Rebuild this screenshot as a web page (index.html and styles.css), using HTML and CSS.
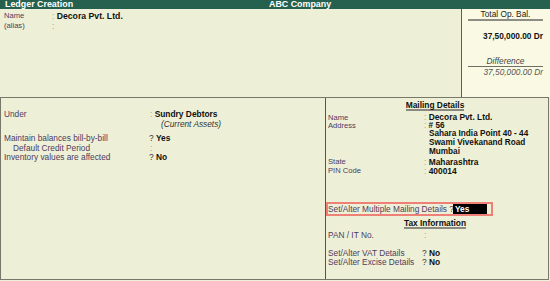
FILE: index.html
```html
<!DOCTYPE html>
<html>
<head>
<meta charset="utf-8">
<link rel="stylesheet" href="styles.css">
</head>
<body>
<div class="app">
  <div class="titlebar">
    <span class="title-left">Ledger Creation</span>
    <span class="title-company">ABC Company</span>
  </div>
  <div class="top">
    <div class="top-left">
      <div class="row"><span class="lbl small">Name</span><span class="val"><span class="colon">:</span> <b class="big">Decora Pvt. Ltd.</b></span></div>
      <div class="row"><span class="lbl small">(alias)</span><span class="val"><span class="colon">:</span></span></div>
    </div>
    <div class="balbox">
      <div class="bal-title">Total Op. Bal.</div>
      <div class="bal-amt">37,50,000.00 Dr</div>
      <div class="bal-diff">Difference</div>
      <div class="bal-amt2">37,50,000.00 Dr</div>
    </div>
  </div>
  <div class="bottom">
    <div class="bl">
      <div class="grid g-under">
        <span class="lbl">Under</span><span class="val"><span class="colon">:</span> <b>Sundry Debtors</b></span>
        <span></span><span class="sub">(Current Assets)</span>
      </div>
      <div class="grid g-bill">
        <span class="lbl">Maintain balances bill-by-bill</span><span class="val q">? <b>Yes</b></span>
        <span class="lbl indent">Default Credit Period</span><span class="val"><span class="colon">:</span></span>
        <span class="lbl">Inventory values are affected</span><span class="val q">? <b>No</b></span>
      </div>
    </div>
    <div class="br">
      <div class="heading"><span>Mailing Details</span></div>
      <div class="mgrid mail">
        <span class="lbl small r-name">Name</span><span class="val r-name"><span class="colon">:</span> <b>Decora Pvt. Ltd.</b></span>
        <span class="lbl small addr">Address</span><span class="val addr"><span class="colon">:</span> <b># 56</b></span>
        <span></span><span class="val addr addr-l"><b>Sahara India Point 40 - 44</b></span>
        <span></span><span class="val addr addr-l"><b>Swami Vivekanand Road</b></span>
        <span></span><span class="val addr addr-l"><b>Mumbai</b></span>
      </div>
      <div class="mgrid state">
        <span class="lbl small">State</span><span class="val"><span class="colon">:</span> <b>Maharashtra</b></span>
        <span class="lbl small">PIN Code</span><span class="val"><span class="colon">:</span> <b>400014</b></span>
      </div>
      <div class="multi">
        <span class="lbl">Set/Alter Multiple Mailing Details ?</span><span class="yes">Yes</span>
      </div>
      <div class="heading tax"><span>Tax Information</span></div>
      <div class="mgrid pan">
        <span class="lbl">PAN / IT No.</span><span class="val"><span class="colon">:</span></span>
      </div>
      <div class="vgrid">
        <span class="lbl">Set/Alter VAT Details</span><span class="val q">? <b>No</b></span>
        <span class="lbl">Set/Alter Excise Details</span><span class="val q">? <b>No</b></span>
      </div>
    </div>
  </div>
</div>
</body>
</html>
```
FILE: styles.css
```css
* { box-sizing: border-box; }
html, body { margin: 0; padding: 0; }
body {
  background: #edf0d6;
  font-family: "Liberation Sans", Arial, sans-serif;
  color: #111;
}
.app {
  width: 550px;
  height: 281px;
  display: flex;
  flex-direction: column;
  background: #edf0d6;
  overflow: hidden;
}
.titlebar {
  height: 9px;
  background-color: #1d5545;
  background-image: radial-gradient(circle, #2f6d5c 0.6px, transparent 0.8px);
  background-size: 2px 2px;
  color: #fff;
  font-weight: bold;
  font-size: 8.9px;
  line-height: 9px;
  display: flex;
  white-space: nowrap;
}
.title-left { width: 269px; padding-left: 5px; }

.top {
  height: 88px;
  display: flex;
}
.top-left {
  flex: 1;
  padding: 1.5px 0 0 4px;
}
.top-left .row {
  display: flex;
  line-height: 10px;
  height: 10px;
}
.top-left .lbl { width: 48px; }
.lbl {
  color: #4f3a5e;
  font-size: 8.3px;
  white-space: nowrap;
}
.lbl.small { font-size: 7.6px; }
.val {
  font-size: 8.4px;
  white-space: nowrap;
}
.val b { font-weight: bold; color: #111; }
.big { font-size: 8.7px; }
.colon { color: #a3a394; font-weight: normal; }
.q { color: #333; }

.balbox {
  width: 89px;
  border-left: 1px solid #5e5e55;
  background: #fafae4;
  display: flex;
  flex-direction: column;
  font-size: 8.3px;
}
.bal-title {
  margin: 0 7px 0 6px;
  height: 12px;
  line-height: 10px;
  text-align: center;
  color: #222;
  border-bottom: 2px solid #8d8d84;
}
.bal-amt {
  margin-top: 10.5px;
  line-height: 9px;
  text-align: right;
  padding-right: 7px;
  font-weight: bold;
}
.bal-diff {
  margin: 16px 7px 0 6px;
  line-height: 9px;
  height: 10px;
  text-align: center;
  font-style: italic;
  color: #444;
  border-bottom: 1px solid #6e6e66;
}
.bal-amt2 {
  margin-top: 1.5px;
  line-height: 9px;
  text-align: right;
  padding-right: 7px;
  font-style: italic;
  color: #555;
}

.bottom {
  height: 183px;
  width: 549px;
  border: 1px solid #77776a;
  display: flex;
}
.bl {
  width: 325px;
  border-right: 1px solid #55554c;
  padding: 11px 0 0 3px;
}
.grid {
  display: grid;
  grid-template-columns: 146px 1fr;
}
.g-under { line-height: 10px; }
.g-bill { margin-top: 5px; line-height: 9.5px; }
.indent { padding-left: 9px; }
.sub {
  padding-left: 11px;
  font-size: 8.3px;
  font-style: italic;
  color: #333;
  white-space: nowrap;
}
.g-bill .q { margin-left: -1px; }

.br {
  flex: 1;
  padding: 2.5px 0 0 0;
  display: flex;
  flex-direction: column;
}
.heading {
  text-align: center;
  line-height: 9px;
  font-size: 8.4px;
  font-weight: bold;
  padding-right: 4px;
}
.heading span {
  display: inline-block;
  border-bottom: 2px solid #8a8a80;
  line-height: 8px;
}
.mgrid {
  display: grid;
  grid-template-columns: 96px 1fr;
  padding-left: 2px;
}
.mail { margin-top: 2px; }
.r-name { line-height: 9px; }
.mail .addr { line-height: 8.7px; }
.val.addr { font-size: 8.2px; }
.addr-l { padding-left: 5px; }
.state { margin-top: 1.7px; }
.state .lbl, .state .val { line-height: 8.5px; }
.multi {
  margin-top: 27px;
  width: 167px;
  height: 14px;
  border: 2px solid #ef8077;
  display: flex;
  align-items: center;
}
.multi .lbl { width: 125px; }
.yes {
  background: #000;
  color: #fff;
  font-weight: bold;
  font-size: 8.4px;
  line-height: 10px;
  height: 10px;
  width: 34px;
  padding-left: 2px;
}
.tax { margin-top: 2.5px; }
.pan { margin-top: 2px; }
.pan .lbl, .pan .val { line-height: 9px; }
.vgrid {
  margin-top: 9px;
  display: grid;
  grid-template-columns: 94px 1fr;
  padding-left: 2px;
  line-height: 9px;
}
```
